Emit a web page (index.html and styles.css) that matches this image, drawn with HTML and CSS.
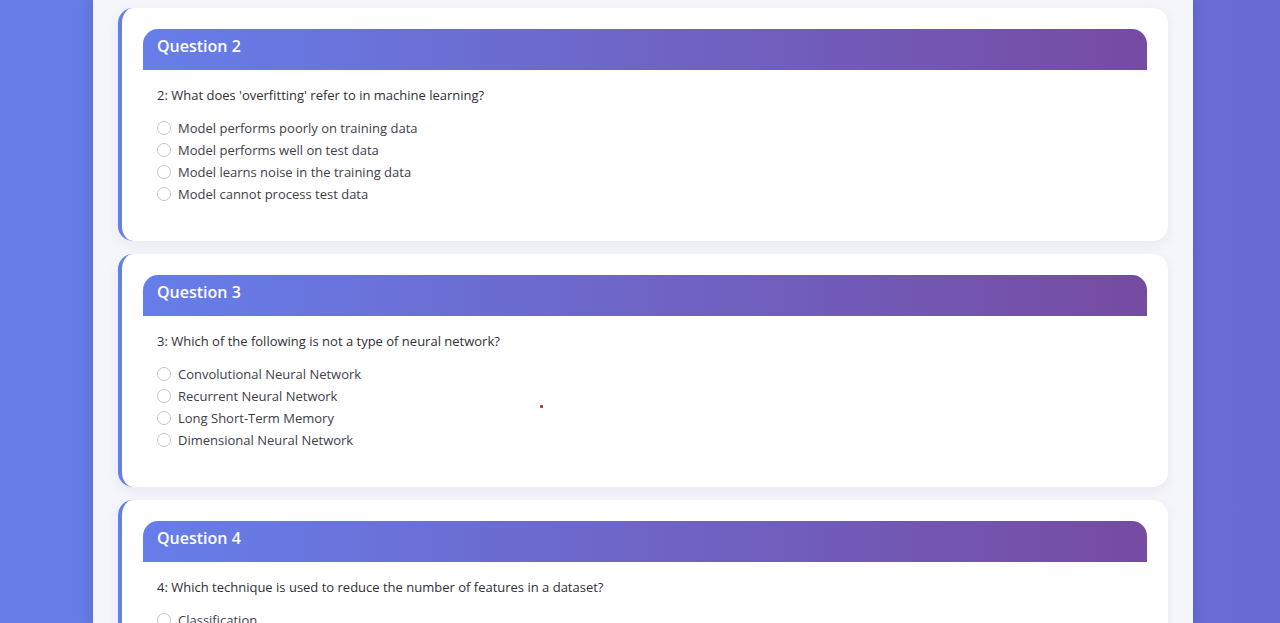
FILE: index.html
```html
<!DOCTYPE html>
<html lang="en">
<head>
<meta charset="utf-8">
<title>Quiz</title>
<link rel="stylesheet" href="styles.css">
</head>
<body>
<div class="page">
  <main class="container">
    <section class="card">
      <h2 class="card-header">Question 2</h2>
      <p class="question">2: What does 'overfitting' refer to in machine learning?</p>
      <ul class="options">
        <li><label><input type="radio" name="q2"><span>Model performs poorly on training data</span></label></li>
        <li><label><input type="radio" name="q2"><span>Model performs well on test data</span></label></li>
        <li><label><input type="radio" name="q2"><span>Model learns noise in the training data</span></label></li>
        <li><label><input type="radio" name="q2"><span>Model cannot process test data</span></label></li>
      </ul>
    </section>
    <section class="card">
      <h2 class="card-header">Question 3</h2>
      <p class="question">3: Which of the following is not a type of neural network?</p>
      <ul class="options">
        <li><label><input type="radio" name="q3"><span>Convolutional Neural Network</span></label></li>
        <li><label><input type="radio" name="q3"><span>Recurrent Neural Network</span></label></li>
        <li><label><input type="radio" name="q3"><span>Long Short-Term Memory</span></label></li>
        <li><label><input type="radio" name="q3"><span>Dimensional Neural Network</span></label></li>
      </ul>
      <span class="cursor-dot"></span>
    </section>
    <section class="card">
      <h2 class="card-header">Question 4</h2>
      <p class="question">4: Which technique is used to reduce the number of features in a dataset?</p>
      <ul class="options">
        <li><label><input type="radio" name="q4"><span>Classification</span></label></li>
      </ul>
    </section>
  </main>
</div>
</body>
</html>
```
FILE: styles.css
```css
* { box-sizing: border-box; }
html, body {
  margin: 0;
  height: 100%;
  overflow: hidden;
}
body {
  background: linear-gradient(90deg, #687de8 0%, #6a74dd 50%, #6b6cd3 100%);
  font-family: "Segoe UI", "Open Sans", "Noto Sans", sans-serif;
  color: #333;
}
.page {
  height: 100%;
  display: flex;
  justify-content: center;
  padding-left: 6px;
}
.container {
  width: 1100px;
  background: #f5f6fb;
  padding: 8px 25px 0 25px;
  box-shadow: 0 0 12px rgba(40, 40, 90, 0.25);
  display: flex;
  flex-direction: column;
  gap: 13px;
  flex-shrink: 0;
}
.card {
  position: relative;
  background: #fff;
  border-left: 4px solid #667eea;
  border-radius: 15px;
  padding: 21px 21px 36px 21px;
  box-shadow: 0 4px 12px rgba(80, 80, 140, 0.08);
  flex-shrink: 0;
}
.card-header {
  margin: 0;
  height: 41px;
  display: flex;
  align-items: center;
  padding: 0 14px 8px 14px;
  background: linear-gradient(90deg, #667eea 0%, #764ba2 100%);
  color: #fff;
  font-size: 16px;
  font-weight: 600;
  border-radius: 15px 15px 0 0;
}
.question {
  margin: 15px 0 12px 0;
  padding-left: 14px;
  font-size: 13px;
  line-height: 20px;
  color: #2f2f36;
}
.options {
  list-style: none;
  margin: 0;
  padding: 0 0 0 14px;
}
.options li {
  height: 22px;
  display: flex;
  align-items: center;
}
.options label {
  display: flex;
  align-items: center;
  font-size: 13px;
  color: #40404a;
}
.options input {
  appearance: none;
  -webkit-appearance: none;
  width: 14px;
  height: 14px;
  margin: 0 7px 0 0;
  border: 1px solid #c4c4c8;
  border-radius: 50%;
  background: #fff;
}
.cursor-dot {
  position: absolute;
  left: 418px;
  top: 151px;
  width: 3px;
  height: 3px;
  background: #d0252a;
  border-radius: 1px;
}
```
